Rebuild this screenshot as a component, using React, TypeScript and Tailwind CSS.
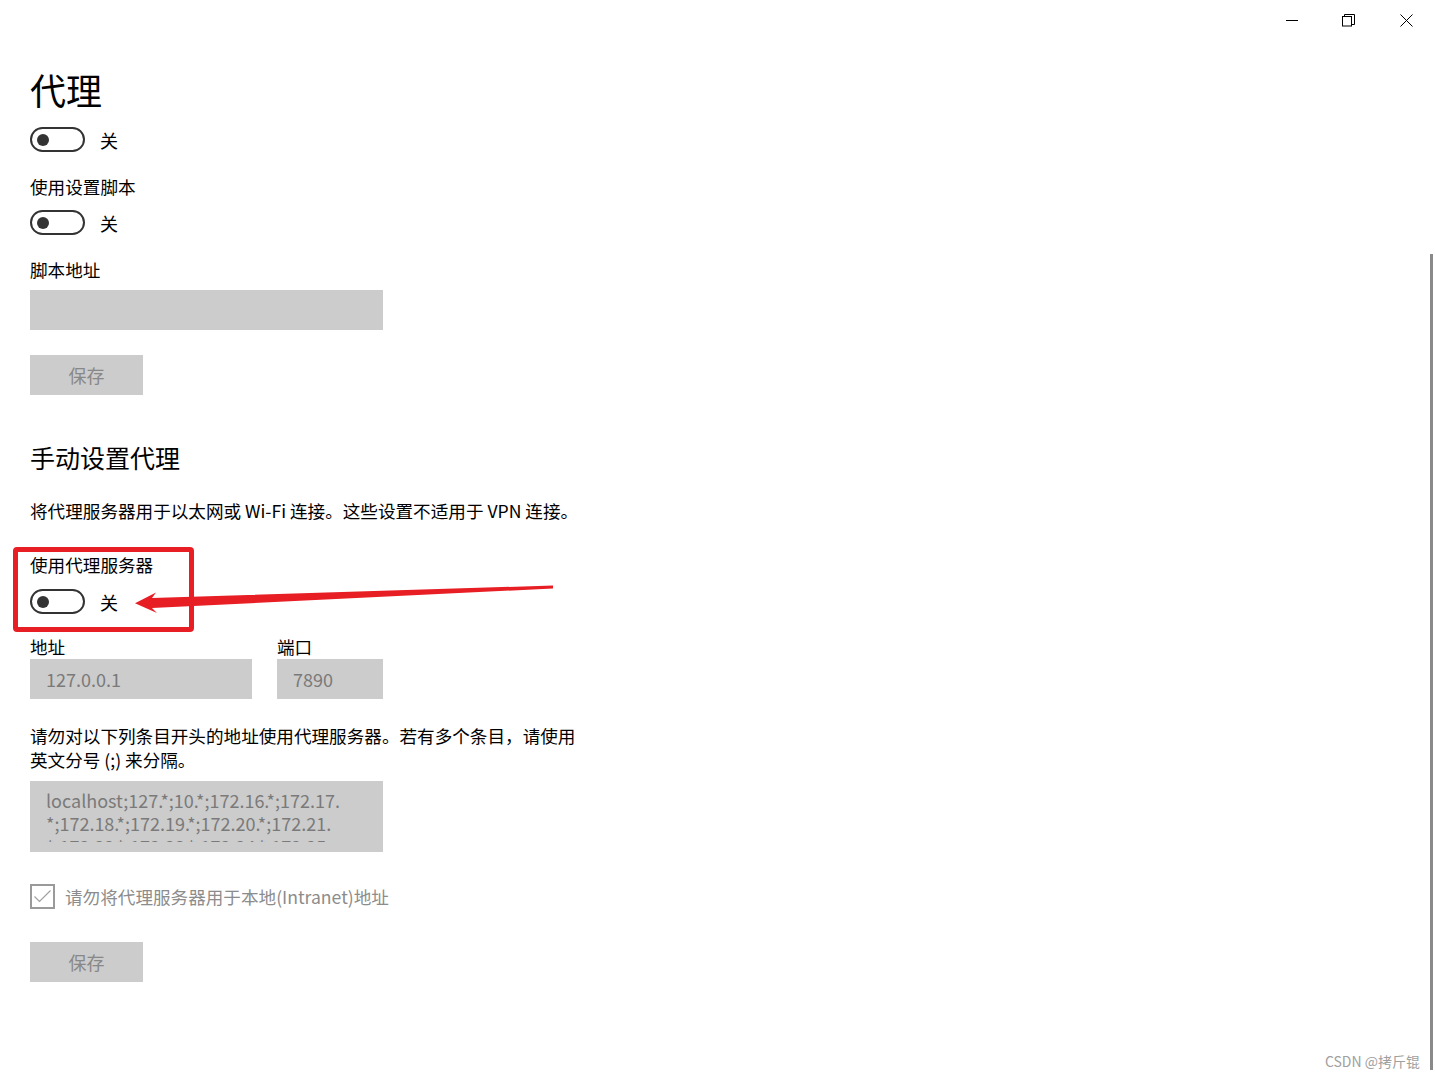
import React from "react";

const font = { fontFamily: '"Noto Sans CJK SC", "Noto Sans", sans-serif' };

function Toggle({ className = "" }: { className?: string }) {
  return (
    <div className={`flex items-center ${className}`}>
      <div className="w-[55px] h-[25px] rounded-full border-2 border-[#333333] flex items-center pl-[5px]">
        <div className="w-[12px] h-[12px] rounded-full bg-[#333333]" />
      </div>
      <span className="ml-[15px] text-[18px] leading-[24px] text-black">关</span>
    </div>
  );
}

function SaveButton({ className = "" }: { className?: string }) {
  return (
    <div className={`w-[113px] h-[40px] bg-[#cccccc] flex items-center justify-center text-[18px] text-[#888888] ${className}`}>
      保存
    </div>
  );
}

export default function App() {
  return (
    <div className="relative w-full h-[1080px] bg-white overflow-hidden text-black" style={font}>
      {/* window caption buttons */}
      <div className="flex justify-end h-[40px]">
        <div className="w-[57px] h-[40px] flex items-center justify-center">
          <svg width="12" height="12" viewBox="0 0 12 12">
            <line x1="0" y1="6.5" x2="12" y2="6.5" stroke="#000" strokeWidth="1" />
          </svg>
        </div>
        <div className="w-[57px] h-[40px] flex items-center justify-center">
          <svg width="13" height="13" viewBox="0 0 13 13" fill="none" stroke="#000" strokeWidth="1">
            <rect x="0.5" y="2.5" width="9" height="9.5" />
            <path d="M2.5 2.5 V0.5 H12.5 V10.5 H9.5" />
          </svg>
        </div>
        <div className="w-[58px] h-[40px] flex items-center justify-center">
          <svg width="13" height="13" viewBox="0 0 13 13" stroke="#000" strokeWidth="1">
            <line x1="0.5" y1="0.5" x2="12.5" y2="12.5" />
            <line x1="12.5" y1="0.5" x2="0.5" y2="12.5" />
          </svg>
        </div>
      </div>

      <div className="flex">
        <div className="flex-1 pl-[30px]">
          <h1 className="mt-[25px] text-[36px] leading-[48px] font-normal">代理</h1>
          <Toggle className="mt-[14px]" />

          <div className="mt-[23px] text-[17.6px] leading-[24px]">使用设置脚本</div>
          <Toggle className="mt-[11px]" />

          <div className="mt-[23px] text-[17.6px] leading-[24px]">脚本地址</div>
          <div className="mt-[8px] w-[353px] h-[40px] bg-[#cccccc]" />
          <SaveButton className="mt-[25px]" />

          <h2 className="mt-[45px] text-[25px] leading-[34px] font-normal">手动设置代理</h2>
          <p className="mt-[25px] text-[17.6px] leading-[24px] whitespace-nowrap">
            将代理服务器用于以太网或 Wi-Fi 连接。这些设置不适用于 VPN 连接。
          </p>

          <div className="mt-[30px] text-[17.6px] leading-[24px]">使用代理服务器</div>
          <Toggle className="mt-[12px]" />

          <div className="mt-[23px] flex gap-[25px]">
            <div className="flex flex-col">
              <span className="text-[17.6px] leading-[20px]">地址</span>
              <div className="mt-[2px] w-[222px] h-[40px] bg-[#cccccc] flex items-center pl-[16px] text-[18px] text-[#7a7a7a]">
                127.0.0.1
              </div>
            </div>
            <div className="flex flex-col">
              <span className="text-[17.6px] leading-[20px]">端口</span>
              <div className="mt-[2px] w-[106px] h-[40px] bg-[#cccccc] flex items-center pl-[16px] text-[18px] text-[#7a7a7a]">
                7890
              </div>
            </div>
          </div>

          <p className="mt-[25px] text-[17.6px] leading-[24px]">
            请勿对以下列条目开头的地址使用代理服务器。若有多个条目，请使用
            <br />
            英文分号 (;) 来分隔。
          </p>

          <div className="mt-[9px] w-[353px] h-[71px] bg-[#cccccc] pt-[8px] px-[16px]">
            <div className="h-[53px] overflow-hidden text-[18px] leading-[23px] text-[#7a7a7a] whitespace-nowrap">
              <div>localhost;127.*;10.*;172.16.*;172.17.</div>
              <div>*;172.18.*;172.19.*;172.20.*;172.21.</div>
              <div>*;172.22.*;172.23.*;172.24.*;172.25.</div>
            </div>
          </div>

          <div className="mt-[32px] flex items-center">
            <div className="w-[25px] h-[25px] border-2 border-[#9a9a9a] flex items-center justify-center">
              <svg width="19" height="15" viewBox="0 0 19 15" fill="none" stroke="#a0a0a0" strokeWidth="1.2">
                <path d="M1.5 7.5 L6.5 12.5 L17.5 1.5" />
              </svg>
            </div>
            <span className="ml-[10px] text-[17.6px] leading-[24px] text-[#8c8c8c]">
              请勿将代理服务器用于本地(Intranet)地址
            </span>
          </div>

          <SaveButton className="mt-[33px]" />
        </div>

        {/* scrollbar */}
        <div className="w-[7px]">
          <div className="mt-[214px] ml-[2px] w-[3px] h-[816px] bg-[#8a8a8a]" />
        </div>
      </div>

      {/* annotation overlay */}
      <div className="absolute left-[13px] top-[547px] w-[181px] h-[85px] border-[5px] border-[#e81e25] rounded-[4px]" />
      <svg className="absolute left-[120px] top-[575px]" width="440" height="45" viewBox="0 0 440 45">
        <polygon
          fill="#e81e25"
          points="15,28.3 36,17.5 32,23 433,10.5 433,13.5 32,33 37,38 "
        />
      </svg>

      <div className="absolute right-[15px] bottom-[8px] text-[14px] text-[#a0a0a0]">CSDN @拷斤锟</div>
    </div>
  );
}
